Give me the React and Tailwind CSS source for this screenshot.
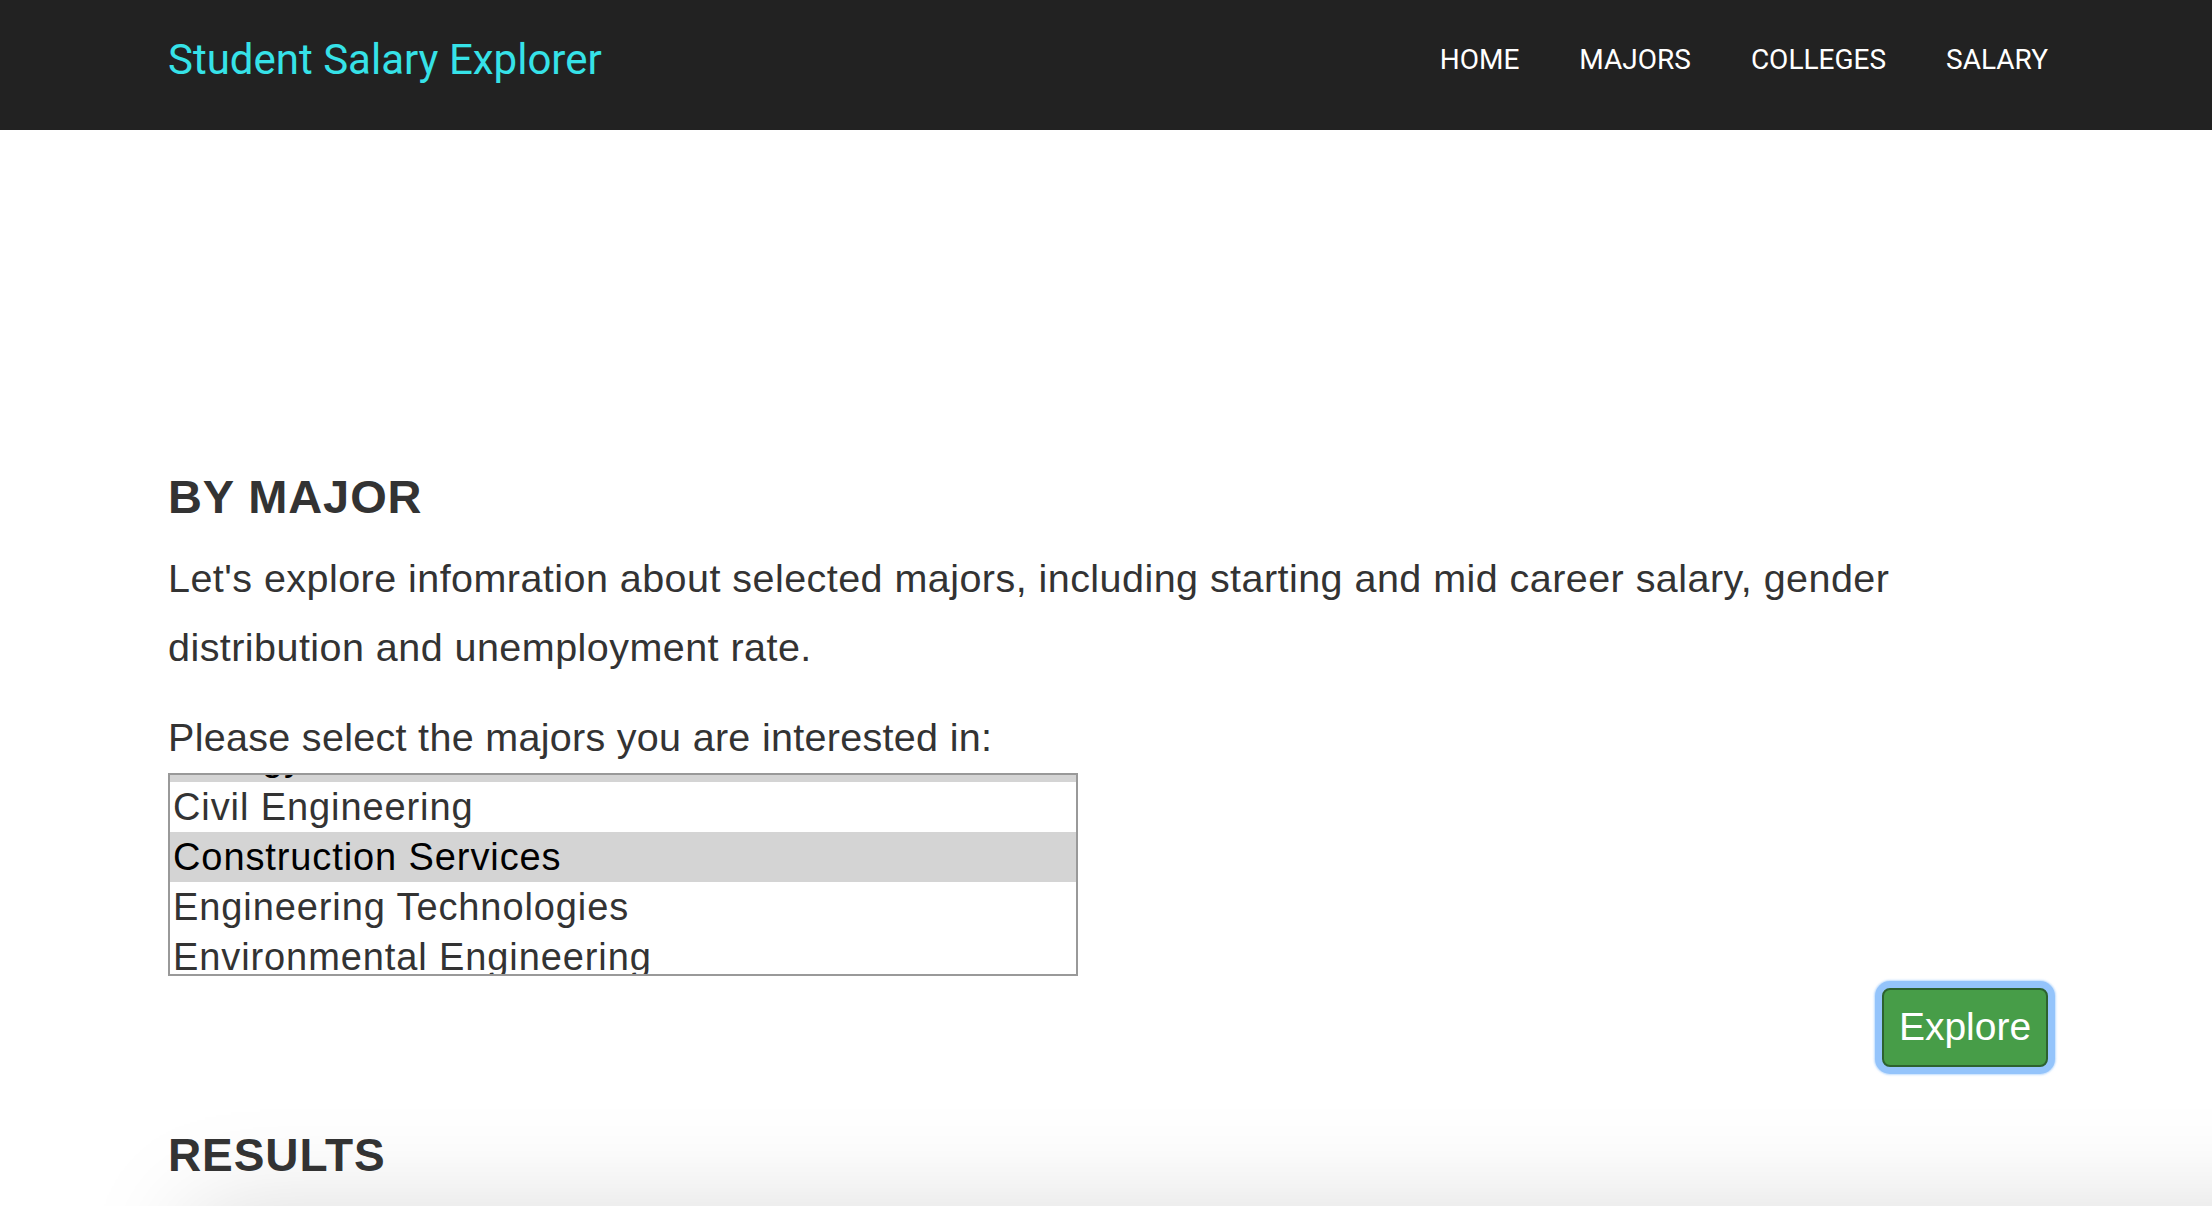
import React from "react";

const items = [
  { t: "Biology and Life Sciences", sel: true },
  { t: "Civil Engineering" },
  { t: "Construction Services", sel: true },
  { t: "Engineering Technologies" },
  { t: "Environmental Engineering" },
  { t: "Geological and Geophysical Engineering" },
];

export default function App() {
  return (
    <div className="min-h-screen w-full overflow-hidden bg-white font-['Liberation_Sans',Arial,sans-serif] text-[#333]">
      <header className="h-[130px] w-full bg-[#222222]">
        <div className="ml-[168px] flex w-[1880px] items-start justify-between font-[Roboto,sans-serif]">
          <div className="mt-[35px] text-[42px] leading-[50px] text-[#36e2e8]">
            Student Salary Explorer
          </div>
          <nav className="mt-[44px] flex gap-[60px] text-[28px] leading-[32px] text-white">
            <a>HOME</a>
            <a>MAJORS</a>
            <a>COLLEGES</a>
            <a>SALARY</a>
          </nav>
        </div>
      </header>

      <main className="ml-[168px] w-[1880px]">
        <h2 className="mt-[342px] text-[47px] font-bold leading-[50px] tracking-[0.9px] text-[#333]">
          BY MAJOR
        </h2>
        <p className="mt-[22px] text-[39.5px] leading-[69px] tracking-[0.45px]">
          Let's explore infomration about selected majors, including starting and mid career salary, gender
          <br />
          distribution and unemployment rate.
        </p>
        <div className="mt-[21px] text-[39.5px] leading-[69px] tracking-[0.3px]">
          Please select the majors you are interested in:
        </div>
        <div className="mt-[1px] h-[203px] w-[910px] overflow-hidden border-2 border-[#999999] bg-white">
          <div className="-mt-[43px]">
            {items.map((it) => (
              <div
                key={it.t}
                className={
                  "h-[50px] overflow-hidden whitespace-nowrap pl-[3px] text-[38px] leading-[50px] tracking-[0.9px] " +
                  (it.sel ? "bg-[#d4d4d4] text-black" : "text-[#333]")
                }
              >
                {it.t}
              </div>
            ))}
          </div>
        </div>

        <div className="mt-[12px] flex justify-end">
          <button className="flex h-[79px] w-[166px] items-center justify-center rounded-[8px] border-2 border-[#2d622f] bg-[#479d48] text-[39px] text-white shadow-[0_0_0_7px_#94c4fb,0_0_2px_8px_rgba(148,196,251,0.6)]">
            Explore
          </button>
        </div>

        <h2 className="mt-[63px] text-[46px] font-bold leading-[50px] tracking-[0.9px] text-[#333]">
          RESULTS
        </h2>
        <div className="ml-[22px] mt-[30px] h-[400px] w-[2200px] bg-white shadow-[0_0_100px_rgba(0,0,0,0.15)]"></div>
      </main>
    </div>
  );
}
